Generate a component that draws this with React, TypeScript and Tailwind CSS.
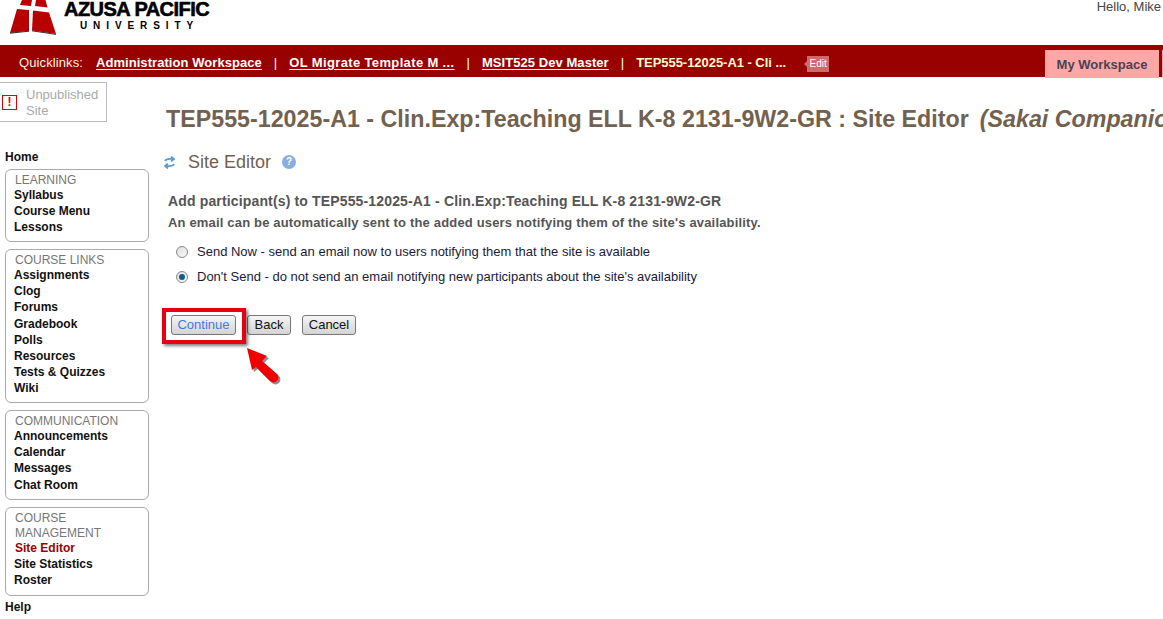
const sections = [
  { title: ['LEARNING'], items: ['Syllabus', 'Course Menu', 'Lessons'], h: 'h-[73px]' },
  {
    title: ['COURSE LINKS'],
    items: ['Assignments', 'Clog', 'Forums', 'Gradebook', 'Polls', 'Resources', 'Tests & Quizzes', 'Wiki'],
    h: 'h-[154px]',
  },
  { title: ['COMMUNICATION'], items: ['Announcements', 'Calendar', 'Messages', 'Chat Room'], h: 'h-[90px]' },
  { title: ['COURSE', 'MANAGEMENT'], items: ['Site Editor', 'Site Statistics', 'Roster'], h: 'h-[89px]' },
];

function Logo() {
  return (
    <svg width="58" height="36" viewBox="0 0 58 36" className="shrink-0">
      <path d="M22 0 L32 0 L31 6 L20 5 Z" fill="#b80000" />
      <path d="M36 0 L45.5 0 L47.5 7.5 L35 6 Z" fill="#b80000" />
      <path d="M17 9 L29 10 L29 31 L10 33 Z" fill="#b80000" />
      <path d="M33 10.5 L49 12.5 L56 34 L32 30.5 Z" fill="#b80000" />
      <path d="M10 33.2 L29 31.2 M32 30.8 L56 34.4" stroke="#333" strokeWidth="1" fill="none" />
    </svg>
  );
}

function Header() {
  return (
    <header className="flex h-[45px] justify-between overflow-hidden bg-white">
      <div className="flex">
        <Logo />
        <div className="ml-[6px] flex flex-col">
          <span className="text-[20px] leading-[18px] font-bold tracking-[-0.55px] text-black [-webkit-text-stroke:0.6px_black]">
            AZUSA PACIFIC
          </span>
          <span className="mt-[2px] pl-[16px] text-[10px] leading-[12px] font-bold tracking-[5.9px] text-black">
            UNIVERSITY
          </span>
        </div>
      </div>
      <span className="pr-[2px] text-[13px] leading-[13px] text-[#444]">Hello, Mike</span>
    </header>
  );
}

function Quicklinks() {
  const link = 'font-bold text-white underline underline-offset-2';
  const sep = 'text-white mx-[12px]';
  return (
    <nav className="flex h-[32px] items-start justify-between bg-[#990000] pl-[19px]">
      <div className="box-border flex h-[32px] items-center pt-[4px] text-[13px] text-[#fdf5e0]">
        <span className="mr-[13px] tracking-[0.1px]">Quicklinks:</span>
        <a className={`${link} tracking-[0.06px]`}>Administration Workspace</a>
        <span className={sep}>|</span>
        <a className={`${link} tracking-[0.36px]`}>OL Migrate Template M ...</a>
        <span className={sep}>|</span>
        <a className={`${link} tracking-[0.06px]`}>MSIT525 Dev Master</a>
        <span className={sep}>|</span>
        <span className="font-bold tracking-[-0.04px] text-[#ffffcc]">TEP555-12025-A1 - Cli ...</span>
        <span className="relative mt-[1px] ml-[21px] flex h-[16px] w-[22px] items-center justify-center bg-[#cc6b6b] text-[10px] text-white">
          <span className="absolute left-[-3px] top-[5px] h-0 w-0 border-y-[3px] border-r-[3px] border-y-transparent border-r-[#cc6b6b]" />
          Edit
        </span>
      </div>
      <div className="mt-[5px] flex">
        <a className="flex h-[28px] w-[114px] items-center justify-center bg-[#ffa6a6] pt-[2px] text-[13px] font-bold text-[#444455]">
          My Workspace
        </a>
        <span className="ml-[3px] h-[28px] w-[1px] bg-[#ffa6a6]" />
      </div>
    </nav>
  );
}

function Sidebar() {
  return (
    <aside className="w-[160px] shrink-0">
      <div className="mt-[5px] flex h-[40px] w-[107px] items-center border border-l-0 border-[#bbb] pl-[2px]">
        <span className="flex h-[15px] w-[15px] items-center justify-center border border-[#e00000] text-[12px] leading-none font-bold text-[#e00000]">
          !
        </span>
        <span className="mt-[2px] ml-[9px] text-[13px] leading-[16px] text-[#aaa]">
          Unpublished
          <br />
          Site
        </span>
      </div>
      <div className="mt-[27px] pl-[5px] text-[12px] leading-[16px] font-bold text-[#111]">Home</div>
      <div className="mt-[4px] flex flex-col gap-[7px] pl-[5px]">
        {sections.map((s) => (
          <div key={s.title[0]} className={`${s.h} w-[144px] rounded-[6px] border border-[#aaa] pt-[3px] pl-[8px]`}>
            {s.title.map((t) => (
              <div key={t} className="pl-[1px] text-[12px] leading-[14.5px] text-[#777]">
                {t}
              </div>
            ))}
            <div className="mt-[-0.5px]">
              {s.items.map((item) => (
                <div
                  key={item}
                  className={`text-[12px] leading-[16.2px] font-bold ${item === 'Site Editor' ? 'pl-[1px] text-[#990000]' : 'text-[#111]'}`}
                >
                  {item}
                </div>
              ))}
            </div>
          </div>
        ))}
      </div>
      <div className="mt-[3px] pl-[5px] text-[12px] leading-[16px] font-bold text-[#111]">Help</div>
    </aside>
  );
}

function Radio({ checked, children }: { checked?: boolean; children: string }) {
  return (
    <label className="flex h-[16px] items-center text-[13px] text-[#1a1a3a]">
      <span className="ml-[16px] flex h-[12px] w-[12px] items-center justify-center rounded-full border border-[#888] bg-gradient-to-br from-[#ddd] to-[#fafafa]">
        {checked && <span className="h-[6px] w-[6px] rounded-full bg-[#0e5f86]" />}
      </span>
      <span className="ml-[9px]">{children}</span>
    </label>
  );
}

function Button({ children, focus, cls }: { children: string; focus?: boolean; cls: string }) {
  return (
    <button
      className={`${cls} flex h-[20px] items-center justify-center rounded-[3px] border border-[#777] bg-gradient-to-b from-[#f5f5f5] to-[#d4d4d4] text-[13px] ${focus ? 'text-[#3b7de0]' : 'text-[#111]'}`}
    >
      {children}
    </button>
  );
}

function Main() {
  return (
    <main className="relative min-w-0 flex-1 overflow-hidden">
      <h1 className="mt-[28px] ml-[6px] text-[23.25px] leading-[28px] font-bold whitespace-nowrap text-[#72614f]">
        TEP555-12025-A1 - Clin.Exp:Teaching ELL K-8 2131-9W2-GR : Site Editor
        <span className="ml-[11px] italic">(Sakai Companion)</span>
      </h1>
      <div className="mt-[17px] flex h-[24px] items-center pl-[4px]">
        <svg width="11" height="13" viewBox="0 0 11 13" fill="none" stroke="#5b9bd5" strokeWidth="1.8">
          <path d="M1 5 C2 2.5 5 2.5 9 3" />
          <path d="M7 0.5 L10 3 L7 5.2" />
          <path d="M10 8 C9 10.5 6 10.5 2 10" />
          <path d="M4 7.8 L1 10 L4 12.5" />
        </svg>
        <span className="ml-[13px] text-[18px] text-[#72614f]">Site Editor</span>
        <span className="ml-[11px] flex h-[14px] w-[14px] items-center justify-center rounded-full bg-[#8aaee0] text-[10px] leading-none font-bold text-white">
          ?
        </span>
      </div>
      <div className="mt-[19px] pl-[8px] text-[14px] leading-[16px] font-bold tracking-[0.15px] text-[#555]">
        Add participant(s) to TEP555-12025-A1 - Clin.Exp:Teaching ELL K-8 2131-9W2-GR
      </div>
      <div className="mt-[6px] pl-[8px] text-[13px] leading-[16px] font-bold tracking-[0.17px] text-[#555]">
        An email can be automatically sent to the added users notifying them of the site's availability.
      </div>
      <div className="mt-[13px] flex flex-col gap-[9px]">
        <Radio>Send Now - send an email now to users notifying them that the site is available</Radio>
        <Radio checked>Don't Send - do not send an email notifying new participants about the site's availability</Radio>
      </div>
      <div className="mt-[30px] ml-[11px] flex items-center gap-[11px]">
        <Button focus cls="w-[65px]">Continue</Button>
        <Button cls="w-[44px]">Back</Button>
        <Button cls="w-[54px]">Cancel</Button>
      </div>

      {/* annotation drawn over the screenshot */}
      <div className="absolute left-[2px] top-[231px] h-[36px] w-[84px] border-[4px] border-[#e60012] shadow-[2px_2px_3px_rgba(0,0,0,0.5)]" />
      <svg width="44" height="46" viewBox="0 0 44 46" className="absolute left-[85px] top-[270px]">
        <path
          d="M2 1 L22 9 L17 14 L32 27 A4.5 4.5 0 0 1 25 34 L11 20 L7 23 Z"
          fill="#000"
          fillOpacity="0.45"
          transform="translate(2 2)"
        />
        <path d="M2 1 L22 9 L17 14 L32 27 A4.5 4.5 0 0 1 25 34 L11 20 L7 23 Z" fill="#f00000" />
      </svg>
    </main>
  );
}

export default function App() {
  return (
    <div className="flex h-[619px] w-[1163px] flex-col overflow-hidden bg-white font-['Liberation_Sans',Arial,sans-serif]">
      <Header />
      <Quicklinks />
      <div className="flex flex-1">
        <Sidebar />
        <Main />
      </div>
    </div>
  );
}
